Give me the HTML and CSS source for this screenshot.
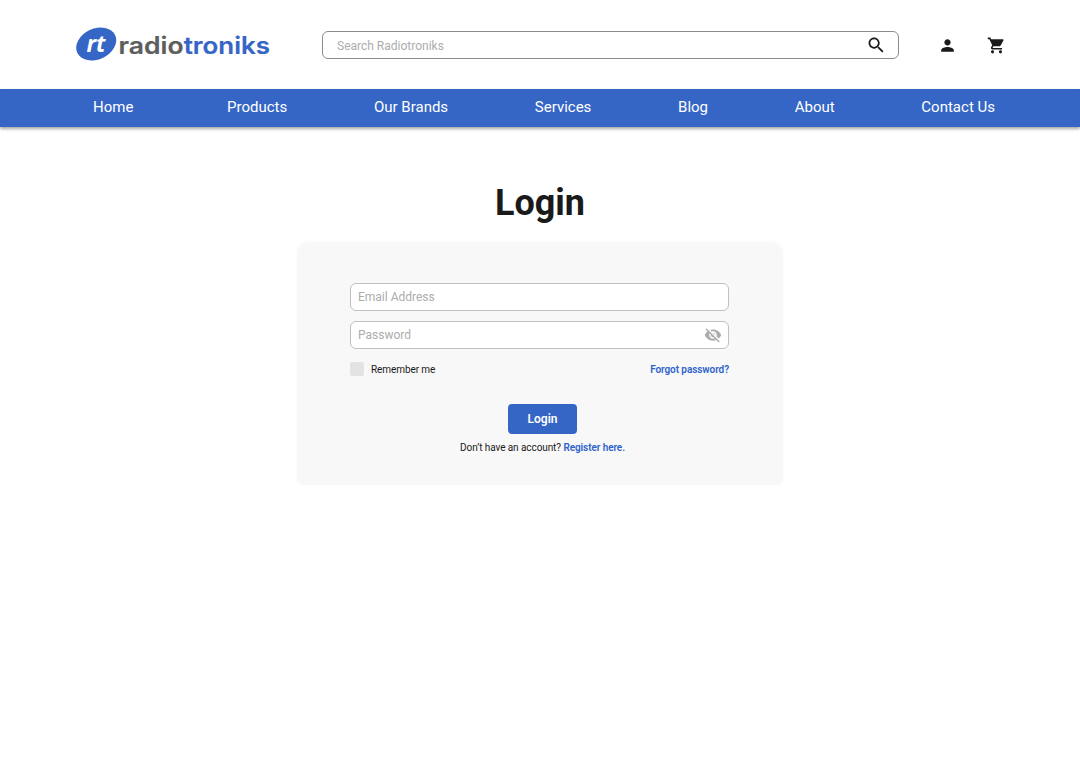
FILE: index.html
```html
<!DOCTYPE html>
<html lang="en">
<head>
    <meta charset="UTF-8">
    <meta name="viewport" content="width=device-width, initial-scale=1.0">
    <title>Radiotroniks - Login</title>
    <link rel="stylesheet" href="styles.css">
</head>
<body>
    <header class="header">
        <a class="logo" href="#">
            <svg width="196" height="36" viewBox="0 0 196 36">
                <ellipse cx="20.2" cy="18" rx="20.9" ry="15.4" transform="rotate(-25 20.2 18)" fill="#3566c5"/>
                <text class="logo-mark" x="10.5" y="25.8" textLength="19" lengthAdjust="spacingAndGlyphs">rt</text>
                <text class="logo-text" x="42.5" y="27.6" fill="#5d5d5d" stroke="#5d5d5d" textLength="65" lengthAdjust="spacingAndGlyphs">radio</text>
                <text class="logo-text" x="107.7" y="27.6" fill="#3566c5" stroke="#3566c5" textLength="86.3" lengthAdjust="spacingAndGlyphs">troniks</text>
            </svg>
        </a>

        <form class="search">
            <input type="text" class="search-input" placeholder="Search Radiotroniks">
            <svg class="search-icon" viewBox="0 0 24 24"><path d="M15.5 14h-.79l-.28-.27C15.41 12.59 16 11.11 16 9.5 16 5.91 13.09 3 9.5 3S3 5.91 3 9.5 5.91 16 9.5 16c1.61 0 3.09-.59 4.23-1.57l.27.28v.79l5 4.99L20.49 19l-4.99-5zm-6 0C7.01 14 5 11.99 5 9.5S7.01 5 9.5 5 14 7.01 14 9.5 11.99 14 9.5 14z"/></svg>
        </form>

        <a class="header-icon" href="#">
            <svg viewBox="0 0 24 24"><path d="M12 12c2.21 0 4-1.79 4-4s-1.79-4-4-4-4 1.79-4 4 1.79 4 4 4zm0 2c-2.67 0-8 1.34-8 4v2h16v-2c0-2.66-5.33-4-8-4z"/></svg>
        </a>
        <a class="header-icon cart" href="#">
            <svg viewBox="0 0 24 24"><path d="M7 18c-1.1 0-1.99.9-1.99 2S5.9 22 7 22s2-.9 2-2-.9-2-2-2zM1 2v2h2l3.6 7.59-1.35 2.45c-.16.28-.25.61-.25.96 0 1.1.9 2 2 2h12v-2H7.42c-.14 0-.25-.11-.25-.25l.03-.12.9-1.63h7.45c.75 0 1.41-.41 1.75-1.03l3.58-6.49c.08-.14.12-.31.12-.48 0-.55-.45-1-1-1H5.21l-.94-2H1zm16 16c-1.1 0-1.99.9-1.99 2s.89 2 1.99 2 2-.9 2-2-.9-2-2-2z"/></svg>
        </a>
    </header>

    <nav class="navbar">
        <a class="home" href="#">Home</a>
        <a href="#">Products</a>
        <a href="#">Our Brands</a>
        <a href="#">Services</a>
        <a href="#">Blog</a>
        <a href="#">About</a>
        <a href="#">Contact Us</a>
    </nav>

    <main>
        <h1 class="heading">Login</h1>

        <form class="login-box">
            <div class="field">
                <input type="email" placeholder="Email Address">
            </div>
            <div class="field">
                <input type="password" placeholder="Password">
                <svg class="eye-icon" viewBox="0 0 24 24"><path d="M12 7c2.76 0 5 2.24 5 5 0 .65-.13 1.26-.36 1.83l2.92 2.92c1.51-1.26 2.7-2.89 3.43-4.75-1.73-4.39-6-7.5-11-7.5-1.4 0-2.74.25-3.98.7l2.16 2.16C10.74 7.13 11.35 7 12 7zM2 4.27l2.28 2.28.46.46C3.08 8.3 1.78 10.02 1 12c1.73 4.39 6 7.5 11 7.5 1.55 0 3.03-.3 4.38-.84l.42.42L19.73 22 21 20.73 3.27 3 2 4.27zM7.53 9.8l1.55 1.55c-.05.21-.08.43-.08.65 0 1.66 1.34 3 3 3 .22 0 .44-.03.65-.08l1.55 1.55c-.67.33-1.41.53-2.2.53-2.76 0-5-2.24-5-5 0-.79.2-1.53.53-2.2zm4.31-.78l3.15 3.15.02-.16c0-1.66-1.34-3-3-3l-.17.01z"/></svg>
            </div>

            <div class="options">
                <label class="remember"><input type="checkbox">Remember me</label>
                <a href="#">Forgot password?</a>
            </div>

            <button type="submit" class="login-btn">Login</button>
            <p class="register">Don’t have an account? <a href="#">Register here.</a></p>
        </form>
    </main>
</body>
</html>
```

FILE: styles.css
```css
* {
    box-sizing: border-box;
}
body {
    margin: 0;
    font-family: Roboto, sans-serif;
    background: #fff;
    color: #1a1a1a;
}
a {
    text-decoration: none;
}
svg {
    display: block;
}
.header {
    display: flex;
    align-items: center;
    height: 89px;
    padding: 0 60px 0 76px;
}
.logo {
    width: 246px;
    margin-bottom: 1px;
}
.logo-mark {
    font-family: "Open Sans", sans-serif;
    font-size: 23.5px;
    font-weight: 700;
    font-style: italic;
    fill: #fff;
}
.logo-text {
    font-family: Inter, sans-serif;
    font-size: 24px;
    font-weight: 600;
    stroke-width: 0.2px;
}
.search {
    display: flex;
    align-items: center;
    width: 577px;
    height: 28px;
    margin-top: 1px;
    padding: 0 12px 0 14px;
    border: 1px solid #8c8c8c;
    border-radius: 6px;
}
input {
    flex: 1;
    min-width: 0;
    padding: 0;
    border: none;
    outline: none;
    background: none;
    font-family: inherit;
    font-size: 12px;
}
.search-input {
    padding-top: 1px;
}
input::placeholder {
    color: #acacac;
}
.search-icon {
    width: 20.5px;
    height: 20.5px;
    fill: #1a1a1a;
}
.header-icon {
    width: 19px;
    margin: 2px 0 0 38.5px;
    fill: #1a1a1a;
}
.header-icon.cart {
    margin-left: 30px;
}
.navbar {
    display: flex;
    justify-content: space-between;
    align-items: center;
    height: 38px;
    padding: 0 85px 2px 93px;
    background: #3566c5;
    box-shadow: 0 2px 3px rgba(0, 0, 0, 0.35);
}
.navbar a {
    color: #fff;
    font-size: 15px;
}
.navbar .home {
    margin-right: 7px;
}
.heading {
    margin: 54px 0 0;
    font-size: 36px;
    line-height: 44px;
    font-weight: 700;
    text-align: center;
}
.login-box {
    width: 482px;
    height: 241px;
    margin: 19px auto 0;
    padding: 39px 52px 0 51px;
    background: #f8f8f8;
    border-radius: 8px;
    box-shadow: 0 0 5px rgba(0, 0, 0, 0.08);
}
.field {
    display: flex;
    align-items: center;
    height: 28px;
    margin-bottom: 10px;
    padding: 0 6px 0 7px;
    background: #fff;
    border: 1px solid #c0c0c0;
    border-radius: 6px;
}
.eye-icon {
    width: 18px;
    height: 18px;
    fill: #acacac;
}
.options {
    display: flex;
    justify-content: space-between;
    align-items: center;
    height: 14px;
    margin-top: 13px;
    font-size: 10px;
    letter-spacing: -0.08px;
}
.remember {
    display: flex;
    align-items: center;
}
.remember input {
    flex: none;
    appearance: none;
    width: 14px;
    height: 14px;
    margin: 0 7px 0 0;
    background: #e3e3e3;
    border-radius: 2px;
}
.options a,
.register a {
    color: #2f63cb;
    font-weight: 600;
}
.login-btn {
    display: block;
    width: 69px;
    height: 30px;
    margin: 28px 0 0 158px;
    padding: 0;
    border: none;
    border-radius: 4px;
    background: #3566c5;
    color: #fff;
    font-family: inherit;
    font-size: 12px;
    font-weight: 600;
}
.register {
    margin: 7px 0 0 6px;
    font-size: 10px;
    letter-spacing: -0.08px;
    line-height: 13px;
    text-align: center;
}
```
